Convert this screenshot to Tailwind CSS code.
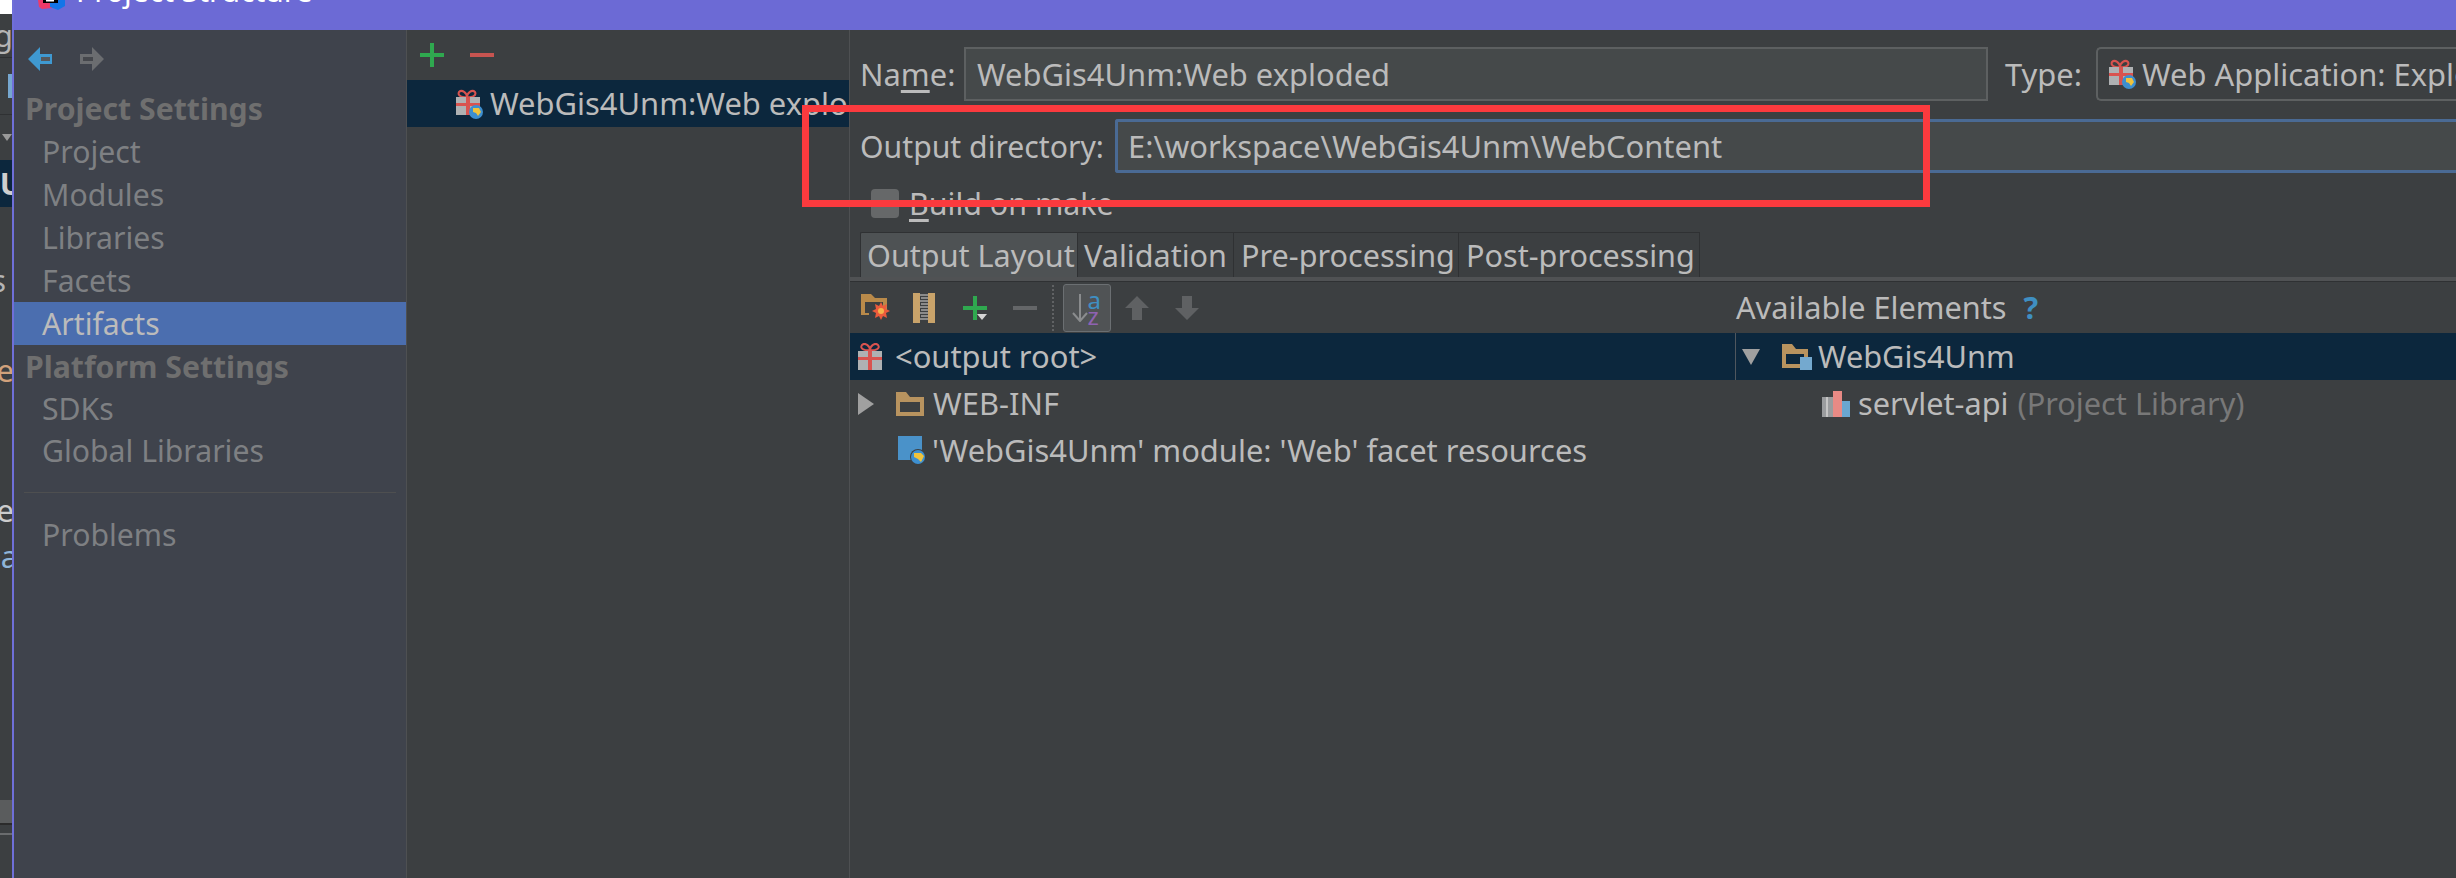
<!doctype html>
<html>
<head>
<meta charset="utf-8">
<script src="https://cdn.jsdelivr.net/npm/@tailwindcss/browser@4"></script>
</head>
<body class="bg-[#3c3f41]">
<div class="relative flex h-[878px] w-[2456px] overflow-hidden bg-[#3c3f41] font-['Noto_Sans',sans-serif] text-[30.9px] leading-[43px] text-[#bbbbbb]">

  <!-- window behind -->
  <div class="flex w-[12px] shrink-0 flex-col overflow-hidden bg-[#3c3f41] text-[#b5b5b5]">
    <div class="h-[14px] bg-white"></div>
    <div class="flex h-[44px] justify-end border-b border-[#2f3133]"><span class="-mr-[1px]">g</span></div>
    <div class="flex h-[57px] items-center justify-end border-b border-[#2f3133]"><div class="h-[24px] w-[4px] bg-[#76a7cf]"></div></div>
    <div class="flex h-[45px] items-center justify-end"><div class="h-0 w-0 border-x-[5px] border-t-[7px] border-x-transparent border-t-[#999]"></div></div>
    <div class="flex h-[47px] items-center justify-end bg-[#0c273d] font-bold text-[#cfcfcf]"><span class="-mr-[11px]">U</span></div>
    <div class="flex h-[95px] items-end justify-end pr-[6px] text-[#b5b5b5]">s</div>
    <div class="flex h-[90px] items-end justify-end text-[#d2a27b]"><span class="-mr-[2px]">e</span></div>
    <div class="flex h-[140px] items-end justify-end text-[#cccccc]"><span class="-mr-[2px]">e</span></div>
    <div class="flex h-[46px] items-end justify-end text-[#8fb5d8]"><span class="-mr-[6px]">a</span></div>
    <div class="h-[222px]"></div>
    <div class="h-[23px] bg-[#5a5c5d]"></div>
    <div class="h-[2px] bg-[#2b2b2b]"></div>
    <div class="h-[8px] bg-[#3c3f41]"></div>
    <div class="h-[2px] bg-[#6a6c6e]"></div>
  </div>

  <!-- dialog -->
  <div class="flex min-w-0 flex-1 flex-col border-l-2 border-[#6f6fd8]">
    <!-- title bar -->
    <div class="flex h-[30px] shrink-0 items-start overflow-hidden bg-[#6c6ad5] pl-[24px] text-[30px] text-white">
      <svg class="h-[10px] w-[27px] shrink-0" viewBox="0 0 27 10"><path d="M0 0h14v8L4 9 1 7z" fill="#ee3a6a"/><path d="M12 0h15v6l-7 4-8-3z" fill="#1375e8"/><rect x="5" y="0" width="15" height="3" fill="#000"/><rect x="8" y="0" width="8" height="1.5" fill="#fff"/></svg>
      <span class="-mt-[31px] ml-[11px] whitespace-nowrap">Project Structure</span>
    </div>

    <div class="flex min-h-0 flex-1">
      <!-- sidebar -->
      <div class="w-[393px] shrink-0 border-r border-[#4e5052] bg-[#3f434c] text-[30.2px] text-[#7e8083]">
        <div class="flex h-[57px] items-center pl-[13px]">
          <svg class="h-[26px] w-[26px]" viewBox="0 0 26 26"><path d="M13 1 1 13l12 12v-7h12V8H13z" fill="#3f99d1"/><path d="M14 11h9v4H14z" fill="#56585c"/></svg>
          <svg class="ml-[26px] h-[26px] w-[26px]" viewBox="0 0 26 26"><path d="M13 1l12 12-12 12v-7H1V8h12z" fill="#6b6d70"/><path d="M4 11h10v4H4z" fill="#45474c"/></svg>
        </div>
        <div class="h-[43px] pl-[11px] text-[#6f6f6f]"><b class="font-bold">Project Settings</b></div>
        <div class="h-[43px] pl-[28px]">Project</div>
        <div class="h-[43px] pl-[28px]">Modules</div>
        <div class="h-[43px] pl-[28px]">Libraries</div>
        <div class="h-[43px] pl-[28px]">Facets</div>
        <div class="h-[43px] bg-[#4b6eaf] pl-[28px] text-[#bbbbbb]">Artifacts</div>
        <div class="h-[42px] pl-[11px] text-[#6f6f6f]"><b class="font-bold">Platform Settings</b></div>
        <div class="h-[42px] pl-[28px]">SDKs</div>
        <div class="h-[43px] pl-[28px]">Global Libraries</div>
        <div class="mx-[10px] mt-[20px] h-px bg-[#4e4f50]"></div>
        <div class="mt-[20px] h-[43px] pl-[28px]">Problems</div>
      </div>

      <!-- artifacts list -->
      <div class="w-[443px] shrink-0 overflow-hidden border-r border-[#4e5052]">
        <div class="flex h-[50px] items-center pl-[13px]">
          <svg class="h-[24px] w-[24px]" viewBox="0 0 24 24"><path d="M10 0h4v10h10v4H14v10h-4V14H0v-4h10z" fill="#2fa84f"/></svg>
          <svg class="ml-[26px] h-[24px] w-[24px]" viewBox="0 0 24 24"><rect y="10" width="24" height="4" fill="#c75450"/></svg>
        </div>
        <div class="flex h-[47px] items-center whitespace-nowrap bg-[#0c273d] pl-[48px]">
          <svg class="h-[30px] w-[29px] shrink-0" viewBox="0 0 29 30"><path d="M4 3c3-3 8 1 8 5C8 9 2 7 4 3zm16 0c-3-3-8 1-8 5 4 1 10-1 8-5z" fill="none" stroke="#d9534f" stroke-width="2"/><rect x="1" y="8" width="24" height="18" fill="#afb1b3"/><rect x="11" y="8" width="4" height="18" fill="#d9534f"/><rect x="1" y="14" width="24" height="3" fill="#d9534f"/><circle cx="21" cy="23" r="7" fill="#3d8fd0"/><path d="M18 19h6l2 4-3 4-2-3-3-1z" fill="#f0c33c"/></svg>
          <span class="ml-[6px]">WebGis4Unm:Web exploded</span>
        </div>
      </div>

      <!-- details -->
      <div class="flex min-w-0 flex-1 flex-col overflow-hidden">
        <div class="mt-[17px] flex h-[54px] items-center whitespace-nowrap pl-[10px]">
          <span class="w-[104px] shrink-0">Na<u class="underline-offset-4">m</u>e:</span>
          <div class="flex h-[54px] w-[1024px] shrink-0 items-center border-2 border-[#5d6061] bg-[#45494a] pl-[11px]">WebGis4Unm:Web exploded</div>
          <span class="ml-[17px] w-[91px] shrink-0">Type:</span>
          <div class="flex h-[54px] w-[400px] shrink-0 items-center rounded-l-[5px] border-2 border-r-0 border-[#5d6061] pl-[10px]">
            <svg class="h-[30px] w-[29px] shrink-0" viewBox="0 0 29 30"><path d="M4 3c3-3 8 1 8 5C8 9 2 7 4 3zm16 0c-3-3-8 1-8 5 4 1 10-1 8-5z" fill="none" stroke="#d9534f" stroke-width="2"/><rect x="1" y="8" width="24" height="18" fill="#afb1b3"/><rect x="11" y="8" width="4" height="18" fill="#d9534f"/><rect x="1" y="14" width="24" height="3" fill="#d9534f"/><circle cx="21" cy="23" r="7" fill="#3d8fd0"/><path d="M18 19h6l2 4-3 4-2-3-3-1z" fill="#f0c33c"/></svg>
            <span class="ml-[5px]">Web Application: Exploded</span>
          </div>
        </div>
        <div class="mt-[18px] flex h-[54px] items-center whitespace-nowrap pl-[10px]">
          <span class="w-[255px] shrink-0 text-[30.2px]">Output directory:</span>
          <div class="flex h-[54px] flex-1 items-center rounded-l-[3px] border-y-[3px] border-l-[3px] border-[#4a6a94] bg-[#45494a] pl-[10px]">E:\workspace\WebGis4Unm\WebContent</div>
        </div>
        <div class="mt-[15px] flex h-[30px] items-center whitespace-nowrap pl-[21px] text-[30.4px]">
          <div class="h-[29px] w-[28px] rounded-[4px] bg-[#666869]"></div>
          <span class="ml-[10px]"><u class="underline-offset-4">B</u>uild on make</span>
        </div>
        <!-- tabs -->
        <div class="mt-[14px] flex h-[49px] shrink-0 items-start whitespace-nowrap border-b-4 border-[#505254] pl-[10px] text-[30.6px]">
          <div class="flex h-[45px] w-[217px] items-center rounded-tl-[2px] border-l border-t border-[#2f3133] bg-[#4e5254] pl-[6px]">Output Layout</div>
          <div class="flex h-[45px] w-[157px] items-center border-x border-t border-[#2f3133] pl-[6px]">Validation</div>
          <div class="flex h-[45px] w-[225px] items-center border-r border-t border-[#2f3133] pl-[7px]">Pre-processing</div>
          <div class="flex h-[45px] w-[241px] items-center border-r border-t border-[#2f3133] pl-[7px]">Post-processing</div>
        </div>
        <div class="h-px shrink-0 bg-[#2f3133]"></div>

        <!-- split panes -->
        <div class="flex min-h-0 flex-1">
          <div class="w-[885px] shrink-0">
            <div class="flex h-[51px] items-center pl-[11px]">
              <svg class="h-[27px] w-[29px]" viewBox="0 0 29 27"><path d="M0 0h10l4 4h12v12H8v5H0z" fill="#b98a4a"/><rect x="4" y="8" width="18" height="11" fill="#3c3f41"/><path d="M20 8l2 4 4-2-1 5 4 2-4 2 1 5-4-2-2 4-2-4-4 2 1-5-4-2 4-2-1-5 4 2z" fill="#ec5b3c"/><circle cx="20" cy="17" r="3" fill="#f6b44a"/></svg>
              <svg class="ml-[23px] h-[30px] w-[22px]" viewBox="0 0 22 30"><rect width="7" height="30" fill="#c9a36a"/><rect x="15" width="7" height="30" fill="#c9a36a"/><path d="M7 2h8M8 5h7M7 8h8M8 11h7M7 14h8M8 17h7M7 20h8M8 23h7M7 26h8" stroke="#8a8a8a" stroke-width="2"/></svg>
              <svg class="ml-[28px] h-[24px] w-[25px]" viewBox="0 0 25 24"><path d="M10 0h4v10h10v4H14v10h-4V14H0v-4h10z" fill="#2fa84f"/><path d="M14 18h10l-5 6z" fill="#d5d5d5"/></svg>
              <svg class="ml-[25px] h-[24px] w-[24px]" viewBox="0 0 24 24"><rect y="10" width="24" height="4" fill="#646668"/></svg>
              <div class="ml-[15px] h-[46px] border-l-2 border-dotted border-[#606264]"></div>
              <div class="ml-[9px] flex h-[48px] w-[48px] items-center justify-center rounded-[3px] border border-[#6b6f72] bg-[#505355]">
                <svg class="h-[28px] w-[16px]" viewBox="0 0 16 28"><path d="M8 0v26M1 19l7 8 7-8" fill="none" stroke="#8a8c8e" stroke-width="2"/></svg>
                <div class="flex w-[15px] flex-col text-[24px] leading-[16px]"><span class="text-[#3f8fc2]">a</span><span class="text-[#8f62b2]">z</span></div>
              </div>
              <svg class="ml-[14px] h-[24px] w-[24px]" viewBox="0 0 24 24"><path d="M12 0l12 12h-7v12H7V12H0z" fill="#5f6163"/></svg>
              <svg class="ml-[26px] h-[24px] w-[24px]" viewBox="0 0 24 24"><path d="M12 24 0 12h7V0h10v12h7z" fill="#5f6163"/></svg>
            </div>
            <div class="flex h-[47px] items-center whitespace-nowrap bg-[#0c273d] pl-[8px]">
              <svg class="h-[27px] w-[24px] shrink-0" viewBox="0 0 24 27"><path d="M4 2c3-3 8 1 8 5C8 8 1 6 4 2zm16 0c-3-3-8 1-8 5 4 1 11-1 8-5z" fill="none" stroke="#d9534f" stroke-width="2"/><rect y="8" width="24" height="19" fill="#afb1b3"/><rect x="10" y="8" width="4" height="19" fill="#d9534f"/><rect y="14" width="24" height="3" fill="#d9534f"/></svg>
              <span class="ml-[13px]">&lt;output root&gt;</span>
            </div>
            <div class="flex h-[47px] items-center whitespace-nowrap pl-[8px]">
              <svg class="h-[22px] w-[16px] shrink-0" viewBox="0 0 16 22"><path d="M0 0l16 11L0 22z" fill="#a0a0a0"/></svg>
              <svg class="ml-[22px] h-[24px] w-[28px] shrink-0" viewBox="0 0 28 24"><path d="M0 0h10l4 5h14v19H0z" fill="#b8935f"/><rect x="4" y="10" width="20" height="10" fill="#3c3f41"/></svg>
              <span class="ml-[9px]">WEB-INF</span>
            </div>
            <div class="flex h-[47px] items-center whitespace-nowrap pl-[48px]">
              <svg class="h-[30px] w-[29px] shrink-0" viewBox="0 0 29 30"><rect width="24" height="24" fill="#4a92c9"/><circle cx="20" cy="21" r="8" fill="#3c3f41"/><circle cx="20" cy="21" r="7" fill="#3d8fd0"/><path d="M16 17h7l3 3-3 6-3-3-4-2z" fill="#f0c33c"/></svg>
              <span class="ml-[5px]">'WebGis4Unm' module: 'Web' facet resources</span>
            </div>
          </div>
          <div class="min-w-0 flex-1 text-[30.7px]">
            <div class="flex h-[51px] items-center whitespace-nowrap pl-[1px]">
              Available Elements
              <span class="ml-[17px] font-bold text-[#3f8fc2]">?</span>
            </div>
            <div class="flex h-[47px] items-center whitespace-nowrap border-l border-[#50575e] bg-[#0c273d] pl-[6px]">
              <svg class="h-[16px] w-[18px] shrink-0" viewBox="0 0 18 16"><path d="M0 0h18L9 16z" fill="#a0a0a0"/></svg>
              <svg class="ml-[22px] h-[26px] w-[30px] shrink-0" viewBox="0 0 30 26"><path d="M0 0h10l4 5h12v19H0z" fill="#b8935f"/><rect x="4" y="10" width="18" height="10" fill="#0c273d"/><rect x="18" y="13" width="12" height="13" fill="#74a9cf"/></svg>
              <span class="ml-[6px]">WebGis4Unm</span>
            </div>
            <div class="flex h-[47px] items-center whitespace-nowrap pl-[87px]">
              <svg class="h-[26px] w-[28px] shrink-0" viewBox="0 0 28 26"><rect y="6" width="11" height="20" fill="#9a9c9e"/><rect x="4" y="6" width="2" height="20" fill="#c5c5c5"/><rect x="11" width="9" height="26" fill="#e88a85"/><rect x="20" y="10" width="8" height="16" fill="#6aa6d0"/></svg>
              <span class="ml-[8px]">servlet-api</span>
              <span class="ml-[9px] text-[#787878]">(Project Library)</span>
            </div>
          </div>
        </div>
      </div>
    </div>
  </div>

  <!-- red annotation rectangle -->
  <div class="absolute left-[802px] top-[105px] h-[102px] w-[1128px] border-[7px] border-[#fb3a3e]"></div>
</div>
</body>
</html>
